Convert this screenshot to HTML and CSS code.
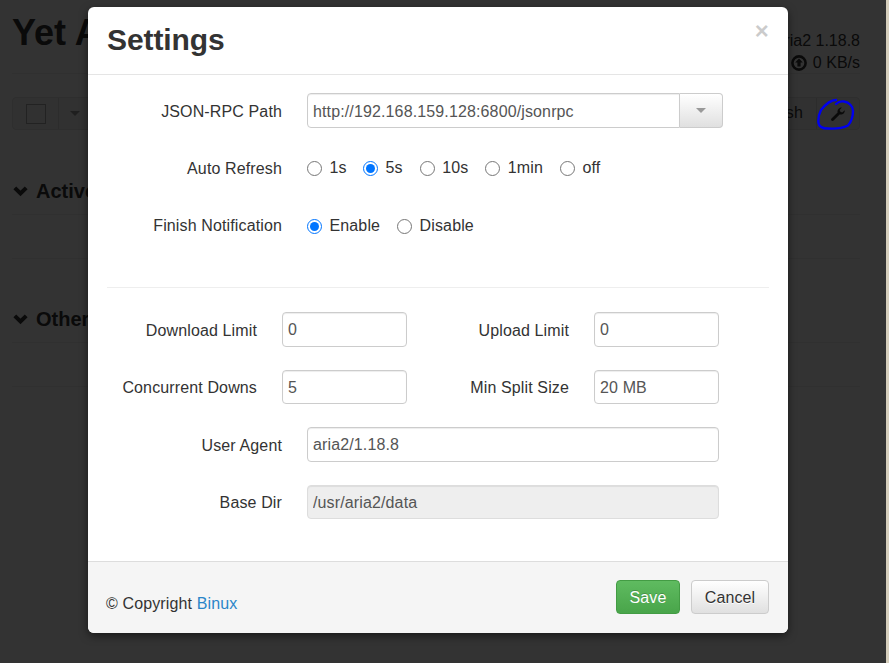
FILE: index.html
```html
<!DOCTYPE html>
<html lang="en">
<head>
<meta charset="utf-8">
<title>Yet Another Aria2 Web Frontend</title>
<link rel="stylesheet" href="styles.css">
</head>
<body>
<div class="page">
  <header class="top">
    <h1 class="brand">Yet Another Aria2 Web Frontend</h1>
    <div class="stats">
      <div>aria2 1.18.8</div>
      <div class="speed">
        <svg class="up" viewBox="0 0 16 16" width="16" height="16"><circle cx="8" cy="8" r="6.6" fill="none" stroke="currentColor" stroke-width="2.6"/><path d="M8 3.4 11.8 7.6H9.6V11.6H6.4V7.6H4.2Z" fill="currentColor"/></svg>
        <span>0 KB/s</span>
      </div>
    </div>
  </header>
  <div class="toolbar">
    <div class="tool left">
      <span class="cell check"><i class="box"></i></span>
      <span class="cell caret-cell"><i class="caret"></i></span>
    </div>
    <div class="tool right">
      <span class="cell refresh">Refresh</span>
      <span class="cell wrench">
        <svg viewBox="0 0 16 16" width="16" height="16"><path d="M1.5 12.6 7.6 6.5C7 4 8.8 1.4 11.9 1.4L9.6 4 10.4 5.8 12.2 6.5 14.8 4.2C15 7.2 12.4 9 9.6 8.5L3.6 14.6C3 15.2 2 15.2 1.4 14.6 .9 14 .9 13.2 1.5 12.6Z" fill="currentColor"/></svg>
      </span>
    </div>
  </div>
  <section class="group">
    <h3 class="group-title"><svg class="chev" viewBox="0 0 15 11" width="15" height="11"><path d="M1.800 1.800 7.500 7.500 13.200 1.800" fill="none" stroke="currentColor" stroke-width="4"/></svg>Active Downloads</h3>
    <div class="group-body"></div>
  </section>
  <section class="group other">
    <h3 class="group-title"><svg class="chev" viewBox="0 0 15 11" width="15" height="11"><path d="M1.800 1.800 7.500 7.500 13.200 1.800" fill="none" stroke="currentColor" stroke-width="4"/></svg>Other Downloads</h3>
    <div class="group-body"></div>
  </section>
</div>
<div class="backdrop"></div>
<svg class="scribble" viewBox="0 0 38 33" width="38" height="33"><path d="M19 2C14 2 8 7 4 12 2 16 1 21 1.500 25 2 29 6 30.500 11 30.500 18 31 26 30 31 27.500 34 24 36 18 36 13 36 8 32 4.500 27 3.500 24 3 21 4 19 6" fill="none" stroke="#0000f0" stroke-width="2.400" stroke-linecap="round" stroke-linejoin="round"/></svg>
<div class="edge"></div>
<div class="modal">
  <div class="modal-header">
    <h3 class="modal-title">Settings</h3>
    <span class="close">×</span>
  </div>
  <form class="modal-body">
    <div class="row">
      <label class="label wide field-label">JSON-RPC Path</label>
      <div class="combo">
        <input class="input combo-input" value="http://192.168.159.128:6800/jsonrpc">
        <span class="combo-btn"><i class="caret"></i></span>
      </div>
    </div>
    <div class="row">
      <span class="label wide">Auto Refresh</span>
      <div class="radios">
        <label class="radio radio-tight"><input type="radio" name="r">1s</label>
        <label class="radio"><input type="radio" name="r" checked>5s</label>
        <label class="radio"><input type="radio" name="r">10s</label>
        <label class="radio"><input type="radio" name="r">1min</label>
        <label class="radio"><input type="radio" name="r">off</label>
      </div>
    </div>
    <div class="row">
      <span class="label wide">Finish Notification</span>
      <div class="radios">
        <label class="radio"><input type="radio" name="n" checked>Enable</label>
        <label class="radio"><input type="radio" name="n">Disable</label>
      </div>
    </div>
    <hr class="divider">
    <div class="row">
      <label class="label narrow field-label">Download Limit</label>
      <input class="input short" value="0">
      <label class="label second field-label">Upload Limit</label>
      <input class="input short" value="0">
    </div>
    <div class="row">
      <label class="label narrow field-label">Concurrent Downs</label>
      <input class="input short" value="5">
      <label class="label second field-label">Min Split Size</label>
      <input class="input short" value="20 MB">
    </div>
    <div class="row">
      <label class="label wide field-label">User Agent</label>
      <input class="input long" value="aria2/1.18.8">
    </div>
    <div class="row">
      <label class="label wide field-label">Base Dir</label>
      <input class="input long" value="/usr/aria2/data" disabled>
    </div>
  </form>
  <div class="modal-footer">
    <span class="copy">© Copyright <a href="#" class="link">Binux</a></span>
    <div class="actions">
      <button type="button" class="btn save">Save</button>
      <button type="button" class="btn cancel">Cancel</button>
    </div>
  </div>
</div>
</body>
</html>
```
FILE: styles.css
```css
* { box-sizing: border-box; }
html, body { margin: 0; height: 100%; }
body {
  position: relative;
  overflow: hidden;
  background: #fff;
  color: #333;
  font: 16px/1.43 "Liberation Sans", Arial, sans-serif;
  letter-spacing: .13px;
}
.page { padding: 0 29px 0 12px; }
.top {
  display: flex;
  justify-content: space-between;
  height: 74px;
  padding-top: 10px;
  border-bottom: 1px solid #eee;
}
.brand { margin: 0; font-size: 36px; line-height: 46px; font-weight: 700; white-space: nowrap; letter-spacing: 0; }
.stats { text-align: right; font-size: 16px; line-height: 22px; padding-top: 20px; letter-spacing: 0; }
.speed { display: flex; justify-content: flex-end; align-items: center; gap: 6px; }
.toolbar { display: flex; justify-content: space-between; margin-top: 23px; }
.tool {
  display: flex;
  height: 33px;
  background: #f5f5f5;
  border: 1px solid #e3e3e3;
  border-radius: 4px;
}
.cell { display: flex; align-items: center; justify-content: center; border-left: 1px solid #ddd; }
.cell:first-child { border-left: 0; }
.check { width: 45px; }
.box { display: block; width: 20px; height: 20px; border: 1px solid #aaa; }
.caret-cell { width: 200px; justify-content: flex-start; padding-left: 11px; }
.refresh { padding: 0 13px; }
.wrench { width: 43px; }
.caret { display: block; width: 0; height: 0; border-style: solid; border-width: 5px 5px 0; border-color: #999 transparent transparent; }
.group { margin-top: 47px; }
.group-title {
  display: flex;
  align-items: center;
  gap: 8px;
  margin: 0;
  padding: 0 0 9px 1px;
  font-size: 20px;
  line-height: 28px;
  font-weight: 700;
  letter-spacing: 0;
  border-bottom: 1px solid #eee;
}
.group-body { height: 44px; border-bottom: 1px solid #eee; }
.other { margin-top: 46px; }
.chev { flex: none; }
.backdrop { position: absolute; inset: 0 3px 0 0; background: rgba(0, 0, 0, .8); }
.edge { position: absolute; top: 0; right: 0; bottom: 0; width: 3px; background: #d6cfbd; }
.scribble { position: absolute; left: 817px; top: 98px; }
.modal {
  position: absolute;
  left: 88px;
  top: 7px;
  width: 700px;
  height: 626px;
  display: flex;
  flex-direction: column;
  background: #fff;
  border-radius: 6px;
  box-shadow: 0 3px 9px rgba(0, 0, 0, .5);
}
.modal-header {
  display: flex;
  justify-content: space-between;
  height: 68px;
  padding: 16px 19px 0;
  border-bottom: 1px solid #e5e5e5;
}
.modal-title { margin: 0; font-size: 30px; line-height: 34px; font-weight: 700; letter-spacing: -.1px; }
.close { font-size: 24px; line-height: 18px; margin-top: -1px; color: #000; opacity: .2; font-weight: 700; }
.modal-body { flex: 1; padding: 18px 19px 0; }
.row { display: flex; align-items: center; height: 34.5px; margin-bottom: 23px; }
.row:first-child { height: 35px; }
.label { flex: none; font-size: 16px; text-align: right; padding-top: 2px; }
.field-label { padding-top: 4px; }
.wide { width: 175px; margin-right: 25px; }
.narrow { width: 150px; margin-right: 25px; }
.second { width: 137px; margin-left: 25px; margin-right: 25px; }
.input {
  height: 34.5px;
  padding: 7px 5px 5px;
  font: 16px "Liberation Sans", Arial, sans-serif;
  letter-spacing: .13px;
  color: #555;
  background: #fff;
  border: 1px solid #ccc;
  border-radius: 4px;
  box-shadow: inset 0 1px 1px rgba(0, 0, 0, .075);
}
.input:disabled { background: #eee; color: #555; border-color: #ddd; }
.short { width: 125px; }
.long { width: 412px; }
.combo { display: flex; width: 416px; height: 35px; }
.combo-input { flex: 1; height: 35px; min-width: 0; border-radius: 4px 0 0 4px; }
.combo-btn {
  width: 43px;
  display: flex;
  align-items: center;
  justify-content: center;
  border: 1px solid #ccc;
  border-left: 0;
  border-radius: 0 4px 4px 0;
  background: linear-gradient(#fff, #e0e0e0);
}
.radios { display: flex; gap: 17px; padding-top: 1px; }
.radio { display: flex; align-items: center; gap: 7.5px; }
.radio-tight { margin-right: -.7px; }
.radio input { margin: 0; width: 15px; height: 15px; }
.divider { border: 0; border-top: 1px solid #eee; margin: 44px 0 24px; }
.modal-footer {
  display: flex;
  justify-content: space-between;
  align-items: center;
  height: 72px;
  padding: 0 19px 0 18px;
  background: #f5f5f5;
  border-top: 1px solid #ddd;
  border-radius: 0 0 6px 6px;
}
.copy { font-size: 16px; padding-top: 13px; }
.link { color: #2a85c9; text-decoration: none; }
.actions { display: flex; gap: 11px; margin-top: -1px; }
.btn {
  height: 34px;
  padding: 1px 0 0;
  font: 16px "Liberation Sans", Arial, sans-serif;
  letter-spacing: .13px;
  border-radius: 4px;
  border: 1px solid #ccc;
  text-shadow: 0 1px 0 #fff;
}
.save { width: 64px; color: #fff; background: linear-gradient(#5fbb60, #49a54a); border-color: #439c44; text-shadow: 0 -1px 0 rgba(0, 0, 0, .2); }
.cancel { width: 78px; color: #333; background: linear-gradient(#fff, #e0e0e0); border-color: #ccc; }
```
